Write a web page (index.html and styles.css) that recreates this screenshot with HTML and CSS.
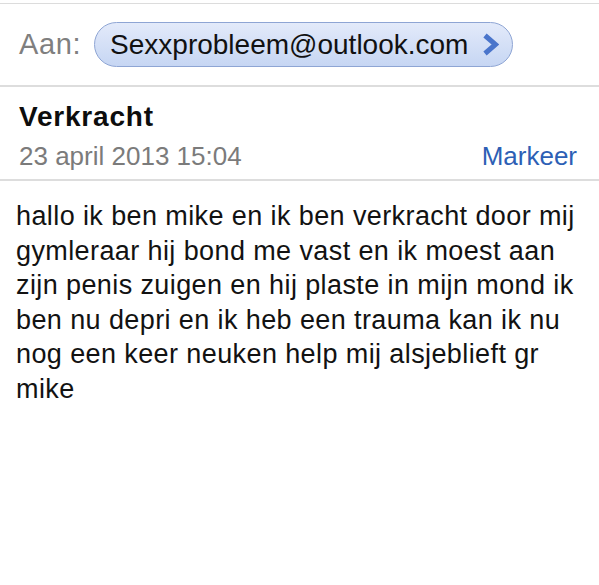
FILE: index.html
```html
<!DOCTYPE html>
<html lang="nl">
<head>
<meta charset="utf-8">
<title>Verkracht</title>
<link rel="stylesheet" href="styles.css">
</head>
<body>
<div class="mail">
  <div class="to-row">
    <span class="to-label">Aan:</span>
    <span class="pill">
      <span class="pill-text">Sexxprobleem@outlook.com</span>
      <svg class="chev" width="17" height="23" viewBox="0 0 17 23" aria-hidden="true">
        <polyline points="3,2.5 13.5,11.5 3,20.5" fill="none" stroke="#4a75cb" stroke-width="5"/>
      </svg>
    </span>
  </div>
  <div class="subject">
    <div class="subject-title">Verkracht</div>
    <div class="meta">
      <span class="date">23 april 2013 15:04</span>
      <span class="mark">Markeer</span>
    </div>
  </div>
  <div class="body-text">
    hallo ik ben mike en ik ben verkracht door mij<br>
    gymleraar hij bond me vast en ik moest aan<br>
    zijn penis zuigen en hij plaste in mijn mond ik<br>
    ben nu depri en ik heb een trauma kan ik nu<br>
    nog een keer neuken help mij alsjeblieft gr<br>
    mike
  </div>
</div>
</body>
</html>
```

FILE: styles.css
```css
html, body {
  margin: 0;
  padding: 0;
  background: #ffffff;
}
body {
  font-family: "Liberation Sans", Arial, sans-serif;
  color: #111111;
  width: 599px;
  height: 585px;
  overflow: hidden;
}
.mail {
  padding-top: 3px;
}
.to-row {
  border-top: 1px solid #dcdcdc;
  border-bottom: 2px solid #dddddd;
  height: 84px;
  box-sizing: border-box;
  display: flex;
  align-items: center;
  padding-left: 19px;
  gap: 13px;
}
.to-label {
  font-size: 29px;
  letter-spacing: 0.6px;
  color: #7f7f7f;
  line-height: 32px;
  position: relative;
  top: -1px;
}
.pill {
  display: flex;
  align-items: center;
  box-sizing: border-box;
  width: 419px;
  height: 45px;
  border: 1px solid #8ea5d4;
  border-radius: 23px;
  background: linear-gradient(#e3eafa, #c6d6f3);
  padding-left: 15px;
  gap: 14px;
}
.pill-text {
  font-size: 28px;
  line-height: 43px;
  color: #111111;
}
.chev {
  display: block;
}
.subject {
  border-bottom: 2px solid #dddddd;
  padding: 14px 22px 7px 19px;
}
.subject-title {
  font-size: 28px;
  font-weight: bold;
  letter-spacing: 0.8px;
  line-height: 32px;
  color: #0d0d0d;
}
.meta {
  display: flex;
  justify-content: space-between;
  align-items: baseline;
  margin-top: 7px;
  line-height: 32px;
}
.date {
  font-size: 26px;
  color: #7b7b7b;
}
.mark {
  font-size: 26px;
  color: #2d5fb5;
}
.body-text {
  padding: 18px 0 0 16px;
  font-size: 27px;
  letter-spacing: 0.4px;
  line-height: 34.5px;
  color: #121212;
  white-space: nowrap;
}
```
